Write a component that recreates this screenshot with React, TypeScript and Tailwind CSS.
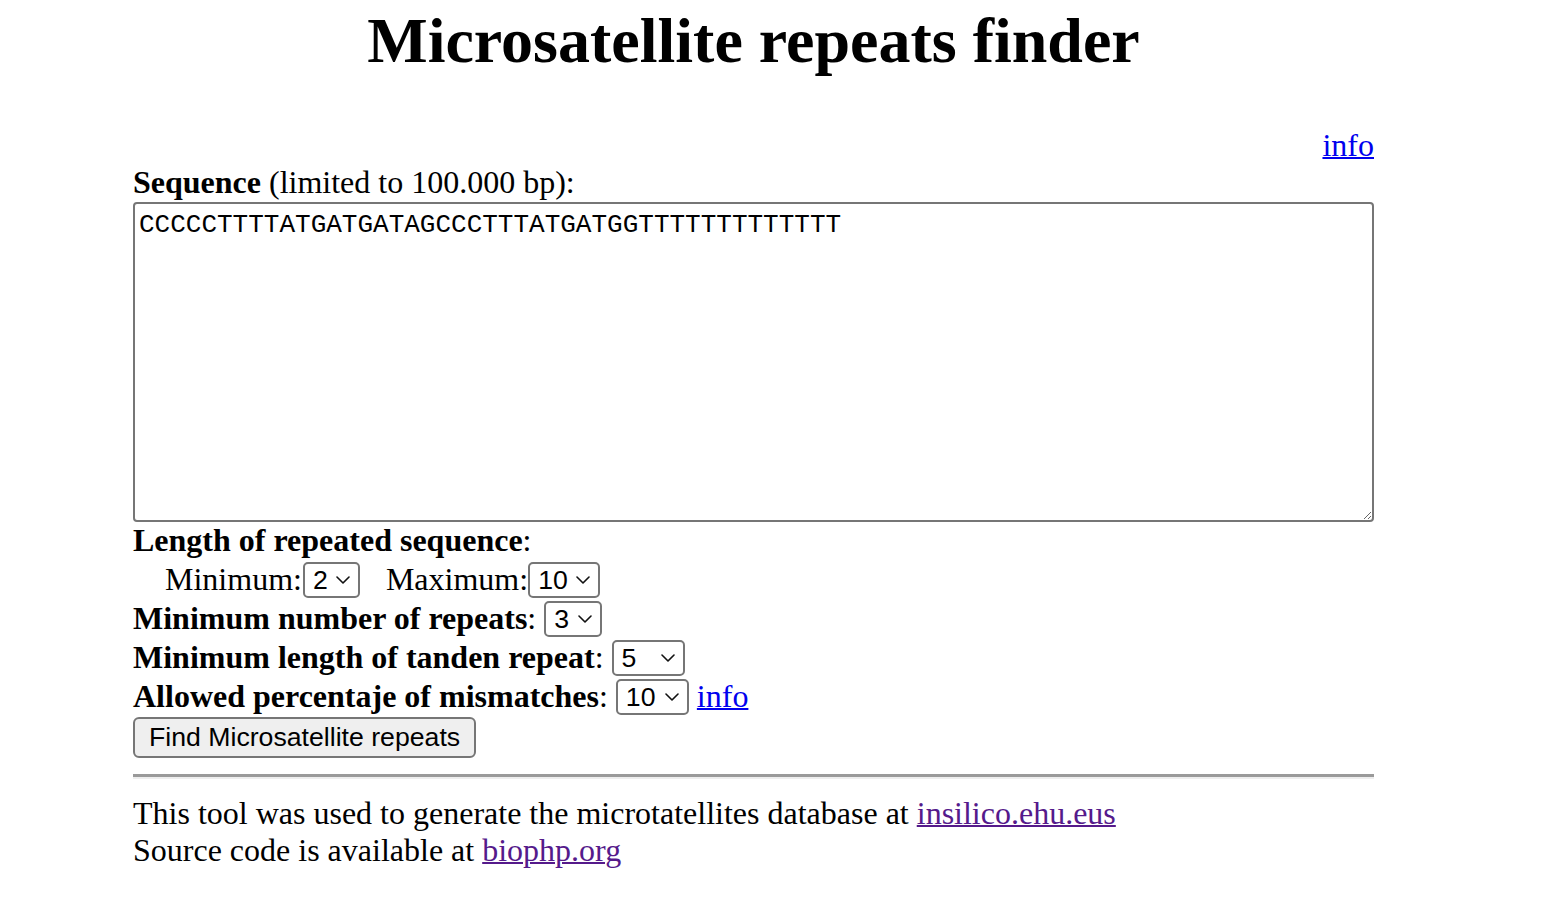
import React from "react";

function Chevron() {
  return (
    <svg
      className="pointer-events-none absolute right-[10px] top-[14px]"
      width="14"
      height="8"
      viewBox="0 0 14 8"
      fill="none"
    >
      <polyline points="1,1 7,7 13,1" stroke="#111" strokeWidth="1.6" strokeLinecap="round" strokeLinejoin="round" />
    </svg>
  );
}

function Sel({ value, options, cls }: { value: string; options: string[]; cls: string }) {
  return (
    <div className={`relative mt-[3px] block h-[36px] shrink-0 ${cls}`}>
      <select
        defaultValue={value}
        className="block h-[36px] w-full appearance-none rounded-[5px] border-2 border-[#767676] bg-white py-0 pl-[8px] text-[26.67px] leading-[32px] text-black font-['Liberation_Sans',Arial,sans-serif]"
      >
        {options.map((o) => (
          <option key={o} value={o}>
            {o}
          </option>
        ))}
      </select>
      <Chevron />
    </div>
  );
}

export default function App() {
  const seq = "CCCCCTTTTATGATGATAGCCCTTTATGATGGTTTTTTTTTTTTT";
  return (
    <div className="min-h-[920px] bg-white">
      <div className="ml-[133px] w-[1241px] pt-[4px] text-[32px] text-black font-['Liberation_Serif','Times_New_Roman',serif]">
        <h1 className="text-center text-[64px] font-bold leading-[73px]">Microsatellite repeats finder</h1>

        <div className="mt-[50px] text-right leading-[37px]">
          <a href="#" className="text-[#0000ee] underline decoration-2">
            info
          </a>
        </div>

        <div className="leading-[37px]">
          <b>Sequence</b> (limited to 100.000 bp):
        </div>

        <textarea
          defaultValue={seq}
          spellCheck={false}
          className="mt-[1px] block h-[320px] w-[1241px] resize rounded-[4px] border-2 border-[#767676] bg-white px-[4px] pt-[6px] text-[26px] leading-[30px] text-black font-['Liberation_Mono','Courier_New',monospace]"
        />

        <div className="leading-[37px]">
          <b>Length of repeated sequence</b>:
        </div>

        <div className="flex h-[39px] items-start">
          <div className="pl-[32px] pt-[2px] leading-[37px]">Minimum:</div>
          <Sel value="2" options={["1", "2", "3", "4", "5", "6"]} cls="ml-[1px] w-[57px]" />
          <div className="ml-[26px] pt-[2px] leading-[37px]">Maximum:</div>
          <Sel value="10" options={["2", "3", "4", "5", "6", "7", "8", "9", "10"]} cls="w-[72px]" />
        </div>

        <div className="flex h-[39px] items-start">
          <div className="pt-[2px] leading-[37px]">
            <b>Minimum number of repeats</b>:
          </div>
          <Sel value="3" options={["2", "3", "4", "5"]} cls="ml-[8px] w-[58px]" />
        </div>

        <div className="flex h-[39px] items-start">
          <div className="pt-[2px] leading-[37px]">
            <b>Minimum length of tanden repeat</b>:
          </div>
          <Sel value="5" options={["5", "6", "7", "8", "9", "10"]} cls="ml-[8px] w-[73px]" />
        </div>

        <div className="flex h-[39px] items-start">
          <div className="pt-[2px] leading-[37px]">
            <b>Allowed percentaje of mismatches</b>:
          </div>
          <Sel value="10" options={["0", "5", "10", "15", "20"]} cls="ml-[8px] w-[73px]" />
          <a href="#" className="ml-[8px] pt-[2px] leading-[37px] text-[#0000ee] underline decoration-2">
            info
          </a>
        </div>

        <button
          type="button"
          className="mt-[2px] block h-[41px] rounded-[6px] border-2 border-[#767676] bg-[#efefef] px-[14px] text-[26.67px] leading-none text-black font-['Liberation_Sans',Arial,sans-serif]"
        >
          Find Microsatellite repeats
        </button>

        <div className="mt-[16px] h-0 border-t-[3px] border-b-2 border-t-[#9a9a9a] border-b-[#eeeeee]" />

        <div className="mt-[16px] leading-[37px]">
          This tool was used to generate the microtatellites database at{" "}
          <a href="#" className="text-[#551a8b] underline decoration-2">
            insilico.ehu.eus
          </a>
        </div>
        <div className="leading-[37px]">
          Source code is available at{" "}
          <a href="#" className="text-[#551a8b] underline decoration-2">
            biophp.org
          </a>
        </div>
      </div>
    </div>
  );
}
